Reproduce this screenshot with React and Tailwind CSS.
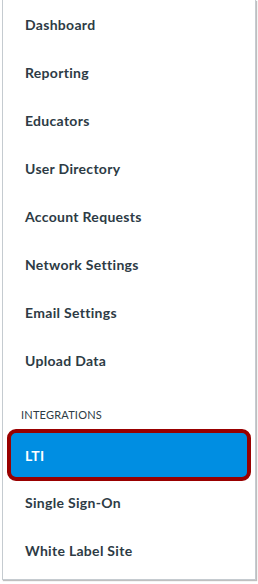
export default function App() {
  const top = [
    "Dashboard",
    "Reporting",
    "Educators",
    "User Directory",
    "Account Requests",
    "Network Settings",
    "Email Settings",
    "Upload Data",
  ];
  const bottom = ["Single Sign-On", "White Label Site"];
  return (
    <div className="w-[258px] h-[584px] bg-white" style={{ fontFamily: "Lato, 'Noto Sans', sans-serif" }}>
      <div className="ml-[2px] w-[254px] h-[580px] bg-white border-l border-r border-b border-[#c5cbd0] shadow-[1px_1px_1px_rgba(0,0,0,0.25)] flex flex-col">
        {top.map((t) => (
          <div key={t} className="h-12 flex items-center pl-[22px] text-[14px] font-bold tracking-[0.3px] text-[#2d3b45]">
            {t}
          </div>
        ))}
        <div className="pt-[25px] pb-[9px] pl-[18px] text-[11px] leading-[11px] text-[#2d3b45] tracking-[0.2px]">
          INTEGRATIONS
        </div>
        <div className="ml-[4px] w-[244px] h-[52px] rounded-[9px] border-[4px] border-[#990000] bg-[#008ee2] flex items-center pl-[14px] text-[14px] font-bold tracking-[0.3px] text-white">
          LTI
        </div>
        <div className="-mt-[3px]">
          {bottom.map((t) => (
            <div key={t} className="h-12 flex items-center pl-[22px] text-[14px] font-bold tracking-[0.3px] text-[#2d3b45]">
              {t}
            </div>
          ))}
        </div>
      </div>
    </div>
  );
}
